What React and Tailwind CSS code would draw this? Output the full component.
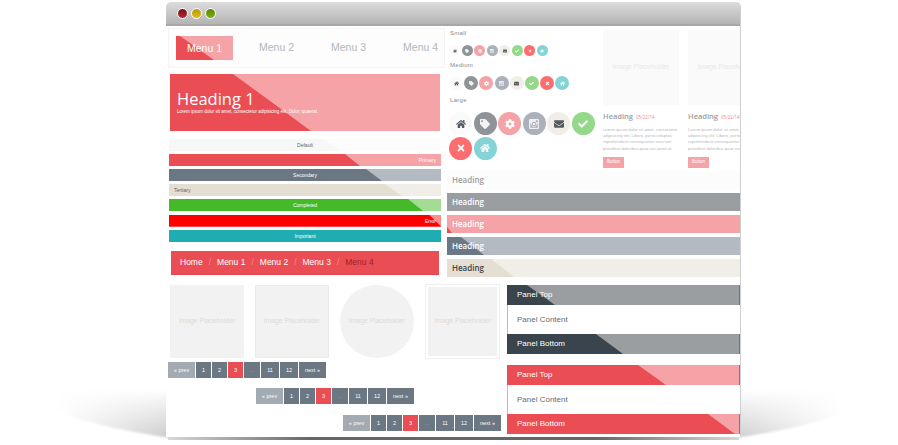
import React from "react";
import { FaHome, FaTag, FaCog, FaEnvelope, FaCheck, FaTimes } from "react-icons/fa";

function CameraGlyph({ className }) {
  return (
    <svg viewBox="0 0 16 16" className={className} fill="currentColor" fillRule="evenodd">
      <path d="M2 0h12a2 2 0 0 1 2 2v12a2 2 0 0 1-2 2H2a2 2 0 0 1-2-2V2a2 2 0 0 1 2-2zM11 2v3h3V2zM8 4.5a3.5 3.5 0 1 0 0 7 3.5 3.5 0 0 0 0-7zM8 6a2 2 0 1 1 0 4 2 2 0 0 1 0-4zM2 7v6.5a.5.5 0 0 0 .5.5h11a.5.5 0 0 0 .5-.5V7h-1.6a4.5 4.5 0 0 1 .1 1 4.5 4.5 0 0 1-9 0 4.5 4.5 0 0 1 .1-1z" />
    </svg>
  );
}

const icons = [
  [FaHome, "bg-[#fafafa]", "text-[#555b60]"],
  [FaTag, "bg-[#8f9498]", "text-[#f4f4f4]"],
  [FaCog, "bg-[#f5a3a6]", "text-white"],
  [CameraGlyph, "bg-[#aab1ba]", "text-[#f0f0f0]"],
  [FaEnvelope, "bg-[#f1ede7]", "text-[#555b60]"],
  [FaCheck, "bg-[#94d88a]", "text-white"],
  [FaTimes, "bg-[#fd6c6e]", "text-white"],
  [FaHome, "bg-[#84d3d6]", "text-white"],
];

function IconRow({ circle, glyph, gap, className }) {
  return (
    <div className={`flex flex-wrap ${gap} ${className}`}>
      {icons.map(([I, bg, fg], i) => (
        <span key={i} className={`flex items-center justify-center rounded-full ${circle} ${bg} ${fg}`}>
          <I className={glyph} />
        </span>
      ))}
    </div>
  );
}

function Label({ children, className = "" }) {
  return <div className={`h-[7px] pl-[3px] text-[6px] leading-[7px] tracking-[0.3px] text-[#888] ${className}`}>{children}</div>;
}

function Bar({ label, base, over, clip, align = "text-center", fg = "text-white", className = "" }) {
  return (
    <div className={`relative h-[12px] w-[272px] ${base} ${className}`}>
      <div className={`absolute inset-0 ${over} ${clip}`} />
      <div className={`relative px-[5px] text-[5px] leading-[12px] ${align} ${fg}`}>{label}</div>
    </div>
  );
}

function Card({ date }) {
  return (
    <div className="w-[76px] shrink-0">
      <div className="flex h-[75px] items-center justify-center whitespace-nowrap bg-[#fafafa] text-[6.8px] text-[#e8e8e8]">Image Placeholder</div>
      <div className="mt-[6px] whitespace-nowrap font-['Open_Sans'] text-[7.5px] font-semibold leading-[10px] text-[#9a9ea1]">
        Heading <span className="ml-[1px] text-[4.5px] font-normal text-[#f0888c]">{date}</span>
      </div>
      <p className="mt-[5px] w-[78px] whitespace-nowrap text-[4.2px] leading-[6.2px] text-[#b5b8bb]">
        Lorem ipsum dolor sit amet, consectetur
        <br />
        adipisicing elit. Libero, porro voluptas
        <br />
        reprehenderit consequuntur nesciunt
        <br />
        provident doloribus quae est animi et.
      </p>
      <div className="mt-[5px] flex h-[11px] w-[21px] items-center justify-center bg-[#f5a3a6] text-[4.5px] text-white">Button</div>
    </div>
  );
}

function HeadBar({ base, over, clip, fg, shade = "", className = "" }) {
  return (
    <div className={`relative h-[18px] w-full ${base} ${shade} ${className}`}>
      {over && <div className={`absolute inset-0 ${over} ${clip}`} />}
      <div className={`relative pl-[5px] font-['Open_Sans'] text-[8px] font-semibold leading-[18px] ${fg}`}>Heading</div>
    </div>
  );
}

function Thumb({ shape = "", className = "" }) {
  return (
    <div className={`flex h-[73px] w-[74px] shrink-0 items-center justify-center whitespace-nowrap bg-[#f2f2f2] text-[6.8px] text-[#dcdcdc] ${shape} ${className}`}>
      Image Placeholder
    </div>
  );
}

function Pager({ className = "" }) {
  const n = "flex h-[16px] items-center justify-center bg-[#6b7783] text-[5.5px] text-white";
  return (
    <div className={`flex gap-[1px] ${className}`}>
      <span className={`${n} w-[27px] !bg-[#a3aab2]`}>« prev</span>
      <span className={`${n} w-[15px]`}>1</span>
      <span className={`${n} w-[15px]`}>2</span>
      <span className={`${n} w-[15px] !bg-[#eb4d55]`}>3</span>
      <span className={`${n} w-[16px] !text-[#a5adb5]`}>...</span>
      <span className={`${n} w-[18px]`}>11</span>
      <span className={`${n} w-[18px]`}>12</span>
      <span className={`${n} w-[27px]`}>next »</span>
    </div>
  );
}

function Panel({ topBase, topOver, topClip, botClip, side, edge }) {
  const row = `relative h-[20px] border-r ${edge}`;
  const txt = "relative pl-[10px] text-[8px] leading-[20px] text-white";
  return (
    <div className="w-[233px]">
      <div className={`${row} ${topBase}`}>
        <div className={`absolute inset-0 ${topOver} ${topClip}`} />
        <div className={txt}>Panel Top</div>
      </div>
      <div className={`h-[29px] border-l ${side} bg-white pl-[9px] text-[8px] leading-[29px] text-[#666c72]`}>Panel Content</div>
      <div className={`${row} ${topBase}`}>
        <div className={`absolute inset-0 ${topOver} ${botClip}`} />
        <div className={txt}>Panel Bottom</div>
      </div>
    </div>
  );
}

export default function App() {
  return (
    <div className="relative h-[445px] w-[898px] overflow-hidden bg-white font-['Liberation_Sans',Arial,sans-serif]">
      {/* floor shadow */}
      <div className="absolute left-0 top-[380px] h-[60px] w-[898px] overflow-hidden [mask-image:linear-gradient(to_right,transparent_6%,black_20%,black_80%,transparent_94%)]">
        <div className="absolute left-[33px] top-[-57px] h-[132px] w-[840px] rounded-[50%] bg-[linear-gradient(to_bottom,#ffffff_50%,#cccccc_83%,#b0b0b0_100%)] blur-[1px]" />
      </div>
      <div className="absolute left-[168px] top-[436px] h-[3.5px] w-[571px] bg-[linear-gradient(to_right,#d8d8d8,#666666_25%,#666666_75%,#d8d8d8)] blur-[0.5px]" />

      <div className="relative ml-[166px] mt-[2px] h-[435px] w-[575px] overflow-hidden rounded-t-[5px] border-r border-[#cfcfcf] bg-white">
        {/* title bar */}
        <div className="flex h-[24px] items-center gap-[3px] border-b-2 border-[#a8a8a8] bg-gradient-to-b from-[#dcdcdc] to-[#b4b4b4] pl-[11px]">
          <span className="h-[11px] w-[11px] rounded-full border-[0.5px] border-white bg-gradient-to-b from-[#7a0f18] to-[#b32a30]" />
          <span className="h-[11px] w-[11px] rounded-full border-[0.5px] border-white bg-gradient-to-b from-[#b89a05] to-[#e0bc10]" />
          <span className="h-[11px] w-[11px] rounded-full border-[0.5px] border-white bg-gradient-to-b from-[#5a8a00] to-[#7fae10]" />
        </div>

        {/* upper zone */}
        <div className="flex h-[257px]">
          <div className="w-[281px] shrink-0 pl-[2px] pt-[2px]">
            <nav className="relative flex h-[40px] w-[277px] items-center border border-[#f5f5f5] bg-[#fdfdfd] pl-[7px] text-[10.5px] text-[#b4b6bb]">
              <div className="relative h-[24px] w-[57px] bg-[#f5a3a6] text-center leading-[24px] text-white">
                <div className="absolute inset-0 bg-[#eb4d55] [clip-path:polygon(0_0,4px_0,38px_100%,0_100%)]" />
                <span className="relative">Menu 1</span>
              </div>
              <span className="ml-[26px]">Menu 2</span>
              <span className="ml-[37px]">Menu 3</span>
              <span className="ml-[37px]">Menu 4</span>
            </nav>

            <section className="relative ml-[2px] mt-[6px] h-[57px] w-[270px] bg-[#f5a3a6]">
              <div className="absolute inset-0 bg-[#eb4d55] [clip-path:polygon(0_0,63px_0,141px_100%,0_100%)]" />
              <div className="relative pl-[7px] pt-[15px] text-white">
                <div className="font-['Open_Sans'] text-[16.5px] font-medium leading-[20px]">Heading 1</div>
                <div className="whitespace-nowrap text-[4.5px] leading-[6px]">Lorem ipsum dolor sit amet, consectetur adipisicing elit. Dolor, quaerat.</div>
              </div>
            </section>

            <div className="ml-[1px] mt-[8px] flex flex-col gap-[3px]">
              <Bar label="Default" base="bg-[#fcfcfc]" over="bg-[#f7f7f7]" clip="[clip-path:polygon(0_0,154px_0,171px_100%,0_100%)]" fg="text-[#666]" />
              <Bar label="Primary" base="bg-[#f5a3a6]" over="bg-[#eb4d55]" clip="[clip-path:polygon(0_0,176px_0,191px_100%,0_100%)]" align="text-right" />
              <Bar label="Secondary" base="bg-[#b3bac2]" over="bg-[#6b7783]" clip="[clip-path:polygon(0_0,197px_0,213px_100%,0_100%)]" />
              <Bar label="Tertiary" base="bg-[#f1ede7]" over="bg-[#e5ded3]" clip="[clip-path:polygon(0_0,216px_0,233px_100%,0_100%)]" align="text-left" fg="text-[#666]" />
              <Bar label="Completed" base="bg-[#a3dd93]" over="bg-[#46b928]" clip="[clip-path:polygon(0_0,239px_0,254px_100%,0_100%)]" />
              <Bar label="Error" base="bg-[#ff8f8f]" over="bg-[#ff0000]" clip="[clip-path:polygon(0_0,260px_0,272px_100%,0_100%)]" align="text-right" className="mt-[0.5px]" />
              <Bar label="Important" base="bg-[#1fadb1]" over="bg-[#1fadb1]" clip="" className="mt-[0.5px]" />
            </div>

            <div className="ml-[3px] mt-[9px] flex h-[24px] w-[268px] items-center border-b border-[#e0444c] bg-[#eb4d55] pl-[9px] text-[8.5px] text-white">
              <span>Home</span>
              <span className="mx-[6px] text-[#f38c90]">/</span>
              <span>Menu 1</span>
              <span className="mx-[6px] text-[#f38c90]">/</span>
              <span>Menu 2</span>
              <span className="mx-[6px] text-[#f38c90]">/</span>
              <span>Menu 3</span>
              <span className="mx-[6px] text-[#f38c90]">/</span>
              <span className="text-[#a3202a]">Menu 4</span>
            </div>
          </div>

          <div className="min-w-0 flex-1">
            <div className="flex h-[145px]">
              <div className="w-[156px] shrink-0 pt-[4px]">
                <Label>Small</Label>
                <IconRow circle="h-[11px] w-[11px]" glyph="h-[4px] w-[4px]" gap="gap-[1.5px]" className="mt-[8px] pl-[2px]" />
                <Label className="mt-[6px]">Medium</Label>
                <IconRow circle="h-[14px] w-[14px]" glyph="h-[5px] w-[5px]" gap="gap-[1.2px]" className="mt-[7px] pl-[2px]" />
                <Label className="mt-[7px]">Large</Label>
                <IconRow circle="h-[23px] w-[23px]" glyph="h-[10px] w-[10px]" gap="gap-[1.5px]" className="mt-[8px] w-[150px] pl-[2px]" />
              </div>
              <div className="flex gap-[9px] pt-[4px]">
                <Card date="05/22/14" />
                <Card date="05/22/14" />
              </div>
            </div>
            <div className="flex flex-col gap-[4px]">
              <HeadBar base="bg-[#fcfcfc]" fg="text-[#9a9ea1]" />
              <HeadBar base="bg-[#9a9ea1]" fg="text-white" />
              <HeadBar base="bg-[#f5a3a6]" over="bg-[#eb4d55]" clip="[clip-path:polygon(0_65%,5px_100%,0_100%)]" fg="text-white" />
              <HeadBar base="bg-[#b3bac2]" over="bg-[#6b7783]" clip="[clip-path:polygon(0_0,14px_0,37px_100%,0_100%)]" fg="text-white" />
              <HeadBar base="bg-[#f1ede7]" over="bg-[#e5ded3]" clip="[clip-path:polygon(0_0,44px_0,67px_100%,0_100%)]" fg="text-[#3a444d]" />
            </div>
          </div>
        </div>

        {/* lower zone */}
        <div className="flex">
          <div className="w-[341px] shrink-0">
            <div className="flex h-[79px] items-start pl-[4px] pt-[2px]">
              <Thumb />
              <Thumb className="ml-[11px] border border-[#ececec]" />
              <Thumb shape="rounded-full" className="ml-[11px]" />
              <div className="-mt-[1px] ml-[11px] border border-[#f0f0f0] p-[2px]">
                <Thumb className="!h-[69px] !w-[69px]" />
              </div>
            </div>
            <Pager className="ml-[2px]" />
            <Pager className="ml-[90px] mt-[10px]" />
            <Pager className="ml-[177px] mt-[11px]" />
          </div>
          <div className="flex flex-col gap-[11px] pt-[2px]">
            <Panel topBase="bg-[#9a9ea1]" topOver="bg-[#3a444d]" topClip="[clip-path:polygon(0_0,20px_0,48px_100%,0_100%)]" botClip="[clip-path:polygon(0_0,89px_0,116px_100%,0_100%)]" side="border-[#bbb]" edge="border-[#6b7783]" />
            <Panel topBase="bg-[#f5a3a6]" topOver="bg-[#eb4d55]" topClip="[clip-path:polygon(0_0,131px_0,159px_100%,0_100%)]" botClip="[clip-path:polygon(0_0,201px_0,228px_100%,0_100%)]" side="border-[#f5a3a6]" edge="border-[#eb4d55]" />
          </div>
        </div>
      </div>
    </div>
  );
}
